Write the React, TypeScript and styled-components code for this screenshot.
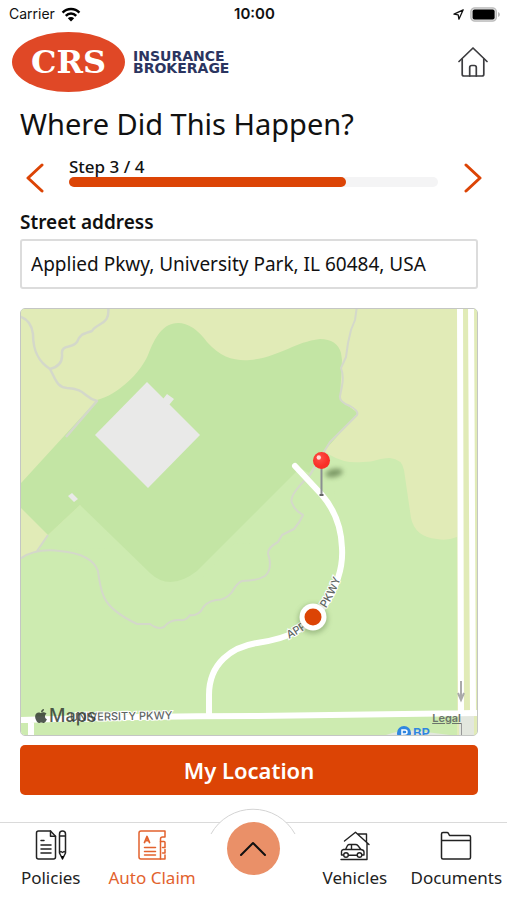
import React from "react";
import styled, { createGlobalStyle } from "styled-components";
import { FaApple } from "react-icons/fa";

const ACCENT = "#dc4405";

const GlobalStyle = createGlobalStyle`
  *, *::before, *::after { box-sizing: border-box; }
  body {
    margin: 0;
    background: #fff;
    color: #111;
    font-family: "Noto Sans", "Open Sans", sans-serif;
  }
  button, input { font: inherit; color: inherit; }
  svg { display: block; }
`;

const Screen = styled.div`
  display: flex;
  flex-direction: column;
  min-height: 100vh;
`;

const StatusBar = styled.div`
  display: grid;
  grid-template-columns: 1fr auto 1fr;
  align-items: center;
  height: 28px;
  padding: 0 7px 0 9px;
  font: 14px/20px Inter, sans-serif;
`;

const StatusGroup = styled.div<{ $end?: boolean }>`
  display: flex;
  align-items: center;
  gap: 6px;
  justify-content: ${(p) => (p.$end ? "flex-end" : "flex-start")};
`;

const Clock = styled.time`
  font-size: 15px;
  font-weight: 600;
`;

const Header = styled.header`
  display: flex;
  align-items: center;
  justify-content: space-between;
  height: 68px;
  padding: 0 19px 0 12px;
`;

const Brand = styled.a`
  display: flex;
  align-items: center;
  gap: 8px;
  color: #2b3560;
  text-decoration: none;
`;

const BrandBadge = styled.span`
  display: grid;
  place-items: center;
  width: 113px;
  height: 60px;
  border-radius: 50%;
  background: #e04826;
  color: #fff;
  font: bold 32px/32px "DejaVu Serif", serif;
`;

const BrandName = styled.span`
  display: flex;
  flex-direction: column;
  font: bold 14px/12px "DejaVu Sans", sans-serif;
`;

const IconButton = styled.button<{ $accent?: boolean }>`
  display: grid;
  place-items: center;
  padding: 0;
  border: 0;
  background: none;
  color: ${(p) => (p.$accent ? ACCENT : "#3c3c3f")};
  cursor: pointer;
`;

const Main = styled.main`
  display: flex;
  flex-direction: column;
  padding: 0 29px 27px 20px;
`;

const Title = styled.h1`
  margin: 8px 0 12px;
  font-size: 29px;
  line-height: 40px;
  font-weight: 400;
`;

const Stepper = styled.div`
  display: grid;
  grid-template-columns: 29px 1fr 29px;
  align-items: center;
  column-gap: 20px;
  margin-right: -9px;
  height: 44px;
`;

const Step = styled.div`
  display: flex;
  flex-direction: column;
  padding-bottom: 12px;
`;

const StepLabel = styled.span`
  font-size: 17px;
  line-height: 20px;
  font-weight: 500;
`;

const Track = styled.div`
  height: 10px;
  border-radius: 5px;
  background: #f4f4f5;
`;

const Fill = styled.div`
  height: 100%;
  border-radius: 5px;
  background: ${ACCENT};
`;

const Label = styled.label`
  margin-top: 8px;
  font-size: 19px;
  line-height: 28px;
  font-weight: 600;
`;

const AddressInput = styled.input`
  width: 100%;
  height: 50px;
  margin-top: 3px;
  padding: 0 9px;
  border: 2px solid #dcdcdc;
  border-radius: 3px;
  background: #fff;
  font-size: 19px;
  outline: 0;
`;

const MapCard = styled.section`
  position: relative;
  aspect-ratio: 458 / 428;
  margin: 19px 0 9px;
  border: 1px solid #c4c6c4;
  border-radius: 5px;
  overflow: hidden;

  > svg { width: 100%; height: 100%; }
`;

const Attribution = styled.span`
  position: absolute;
  left: 12px;
  bottom: 8px;
  display: flex;
  align-items: center;
  color: rgba(50, 60, 50, 0.85);
  font: 500 18px/22px Inter, sans-serif;
`;

const Legal = styled.a`
  position: absolute;
  right: 16px;
  bottom: 9px;
  color: #6b746b;
  font: 600 11px/16px Inter, sans-serif;
`;

const RoadLabel = styled.text`
  font: 500 11px Inter, sans-serif;
  fill: #5f6664;
  stroke: #fff;
  stroke-width: 2px;
  paint-order: stroke;
`;

const PlaceLabel = styled.text`
  font: 600 13px Inter, sans-serif;
  fill: #2f86e0;
`;

const PrimaryButton = styled.button`
  height: 50px;
  border: 0;
  border-radius: 5px;
  background: ${ACCENT};
  color: #fff;
  font-size: 22px;
  font-weight: 600;
  cursor: pointer;
`;

const TabBar = styled.nav`
  display: grid;
  grid-template-columns: repeat(5, 1fr);
  height: 78px;
  margin-top: auto;
  border-top: 1px solid #dadada;
`;

const Tab = styled.a<{ $active?: boolean }>`
  display: flex;
  flex-direction: column;
  align-items: center;
  gap: 5px;
  padding-top: 6px;
  color: ${(p) => (p.$active ? "#e2622e" : "#222")};
  font-size: 17px;
  line-height: 24px;
  white-space: nowrap;
  text-decoration: none;
`;

const CenterSlot = styled.div`
  position: relative;
  display: flex;
  justify-content: center;
`;

const Arc = styled.svg`
  position: absolute;
  top: -15px;
  left: 50%;
  transform: translateX(-50%);
`;

const ExpandButton = styled.button`
  position: relative;
  display: grid;
  place-items: center;
  width: 53px;
  height: 53px;
  margin-top: -1px;
  padding: 0;
  border: 0;
  border-radius: 50%;
  background: #ea9068;
  color: #111;
  cursor: pointer;
`;

const line = {
  fill: "none",
  stroke: "currentColor",
  strokeLinecap: "round" as const,
  strokeLinejoin: "round" as const,
};

const WifiIcon = () => (
  <svg width="20" height="15" viewBox="0 0 20 15" aria-hidden="true">
    <g fill="none" stroke="#000" strokeWidth="2.5">
      <path d="M1.6 5.6a11.8 11.8 0 0 1 16.8 0" />
      <path d="M4.8 8.8a7.3 7.3 0 0 1 10.4 0" />
    </g>
    <path d="M10 14.6 6.8 11.2a4.6 4.6 0 0 1 6.4 0z" />
  </svg>
);

const LocationIcon = () => (
  <svg width="11" height="11" viewBox="0 0 11 11" aria-hidden="true">
    <path d="M10.2.8 1 5.2l4.2.6.7 4.4z" {...line} strokeWidth="1.3" />
  </svg>
);

const BatteryIcon = () => (
  <svg width="30" height="15" viewBox="0 0 30 15" aria-hidden="true">
    <rect x=".8" y=".8" width="25.6" height="13.4" rx="4" fill="#ddd" stroke="#bbb" strokeWidth="1.2" />
    <rect x="2.6" y="2.6" width="22" height="9.8" rx="2" />
    <path d="M28 5q2 .8 2 2.5T28 10z" fill="#bbb" />
  </svg>
);

const HomeIcon = () => (
  <svg width="30" height="30" viewBox="0 0 30 30" aria-hidden="true">
    <g {...line} strokeWidth="1.7">
      <path d="M1 14.5 15 1l14 13.5" />
      <path d="M4.2 12v15.2q0 1.8 1.800 1.800h18q1.800 0 1.800-1.800V12" />
      <path d="M11.700 29V20.500q0-2 2-2h2.600q2 0 2 2V29" />
    </g>
  </svg>
);

const Chevron = ({ d, w, h, sw }: { d: string; w: number; h: number; sw: number }) => (
  <svg width={w} height={h} viewBox={`0 0 ${w} ${h}`} aria-hidden="true">
    <path d={d} {...line} strokeWidth={sw} />
  </svg>
);

const PoliciesIcon = () => (
  <svg width="32" height="32" viewBox="0 0 32 32" aria-hidden="true">
    <g {...line} strokeWidth="1.5">
      <path d="M15.500 2H3.500Q1.500 2 1.500 4v24q0 2 2 2H18.500q2 0 2-2V7.200z" />
      <path d="M15.500 2v5.200h5M6 11.500h3M6 16h10M6 20h10M6 24h10" />
      <path d="M24.500 5q0-3 3-3t3 3v19l-3 6-3-6zM24.500 7h6M24.500 23.500l1.500-1 1.500 1 1.500-1 1.500 1" />
    </g>
    <path d="m26 27 1.500 3.500L29 27z" />
  </svg>
);

const ClaimIcon = () => (
  <svg width="30" height="32" viewBox="0 0 30 32" aria-hidden="true">
    <g {...line} strokeWidth="1.5">
      <path d="M23.500 30H4q-2 0-2-2V4q0-2 2-2h24v6h-2.500q-2 0-2 2v2.500z" />
      <path d="M23.500 12.500h3.500q1 0 1 1v5h-2.500M28 20.500v3.500h-2.500M28 26v4h-4.500" />
      <path d="M7.500 18.500h11M7.500 22.500h11M7.500 26h11" />
      <path d="m7.500 13.500 2.500-6 2.500 6M8.600 11.500h3" strokeWidth="1.800" />
    </g>
  </svg>
);

const VehiclesIcon = () => (
  <svg width="32" height="32" viewBox="0 0 32 32" aria-hidden="true">
    <g {...line} strokeWidth="1.400">
      <path d="M5.500 12 16.500 3.300 30 15.500M18.500 5h9v8.500M28 14v16.500H2" />
      <path d="M4 26H2.500v-3.500q0-1.500 2-2h2l2-4q.6-1 2-1h6q1.500 0 2.500 1.200l3 3.800q3 .5 3 2.500v3H23M9.500 26.200h9M6.500 20.500h15.500M12.500 15.500v5" />
      <circle cx="7" cy="26" r="2.300" />
      <circle cx="20.500" cy="26" r="2.300" />
    </g>
  </svg>
);

const DocumentsIcon = () => (
  <svg width="32" height="32" viewBox="0 0 32 32" aria-hidden="true">
    <g {...line} strokeWidth="1.500">
      <path d="M1.500 28.500V5q0-1.500 1.500-1.500h4q1 0 1.500 1l1 2H29q1.500 0 1.500 1.500v20.500q0 1.500-1.500 1.500H3q-1.500 0-1.500-1.500zM1.500 11.500h29" />
    </g>
  </svg>
);

const APPLIED_PKWY =
  "M209 714V695C209 663 232 647 257 643Q284 639 299 630Q312 621 321 610Q332 597 338 578Q343 563 342 548Q341 517 322 495L295 466";

const MapDrawing = () => (
  <svg viewBox="21 309 456 426" preserveAspectRatio="xMidYMid slice" role="img" aria-label="Map of Applied Pkwy">
    <defs>
      <path id="applied-label" d="M289 639Q303 632 316 621Q332 605 343 572V540" />
      <filter id="soft" x="-50%" y="-100%" width="200%" height="300%">
        <feGaussianBlur stdDeviation="2.500" />
      </filter>
      <radialGradient id="pin-head" cx=".4" cy=".35">
        <stop offset="0" stopColor="#ff5148" />
        <stop offset="1" stopColor="#f92f28" />
      </radialGradient>
    </defs>
    <rect x="-200" y="0" width="1000" height="1100" fill="#cdebb0" />
    <path
      fill="#e1ebb7"
      d="M0 300H490V740H457V537Q447 541 437 539Q415 537 411 518L404 470Q402 459 390 458C378 458 376 462 363 462Q345 464 330 455L200 480L48 535L38 551L0 565z"
    />
    <path fill="#cdebb0" d="M322 450L330 455L340 540L60 550L48 535L80 505L200 580z" />
    <path
      fill="#c3e5a4"
      d="M0 503L22 482L97 400C118 395 141 372 148 355C155 337 163 323 178 323Q193 323 207 342C221 358 235 361 250 360C280 357 294 342 320 339Q337 339 341 353L342 360L340 400L358 413L326 449L309 473L300 468L197 571Q170 592 150 573L80 505L48 535L0 487z"
    />
    <g fill="#e9e9e8">
      <path d="M147 382 200 435 148 488 95 435z" />
      <path d="m167 394 7 5-5 6-6-6zM72 493l6 6-4 3-6-6z" />
    </g>
    <g fill="none" stroke="#d4d8ca" strokeWidth="2.500" strokeLinejoin="round">
      <path d="M18 316Q31 319 33 334C33 352 39 362 50 369C56 380 57 387 67 388C86 389 83 397 97 401L66 437" />
      <path d="M108 306C111 326 97 322 92 331C83 334 80 334 77 342C72 349 61 344 62 354Q63 366 50 369" />
      <path
        strokeWidth="2"
        d="M357 306L355 320 351 330 348 343 346 357 341 368Q344 376 342 386L340 396Q339 402 350 406Q359 411 357 415L330 442 325 450 310 475Q288 496 292 503Q295 511 303 515Q300 522 294 529L282 535 278 542Q265 549 269 557Q272 570 265 576Q257 581 242 581Q237 583 232 592Q226 600 216 600Q205 602 201 611Q196 616 190 615Q186 621 180 620Q170 619 164 627Q158 630 150 624L137 624Q110 611 104 597Q100 588 98 571Q92 554 60 551Q35 548 20 559M37 551 48 535"
      />
    </g>
    <path d="M386 735q20-7 40-3l24 3M459 713h15v24h-15z" fill="#e3e7de" />
    <g fill="none" stroke="#fff" strokeWidth="6">
      <path d="M460 300 461 716M471 300 473 716M18 720Q140 716 257 716L477 713M31 720V740" />
      <path d={APPLIED_PKWY} strokeLinecap="round" />
    </g>
    <path d="M461 681v18m-3-6 3 7 3-7" fill="none" stroke="#aaa" strokeWidth="2" />
    <path d="M461.500 723v14" stroke="#999" />
    <RoadLabel x="70" y="721" transform="rotate(-1 70 721)">UNIVERSITY PKWY</RoadLabel>
    <RoadLabel>
      <textPath href="#applied-label">APPLIED PKWY</textPath>
    </RoadLabel>
    <circle cx="404" cy="733" r="7" fill="#2f86e0" />
    <path d="M402 737v-7h3a2 2 0 0 1 0 4h-3" fill="none" stroke="#fff" strokeWidth="1.500" />
    <PlaceLabel x="413" y="738">BP</PlaceLabel>
    <circle cx="313" cy="619" r="15" fill="#5b7a4a" opacity=".4" filter="url(#soft)" />
    <circle cx="313" cy="617" r="13.500" fill="#fff" />
    <circle cx="313" cy="617" r="8.500" fill={ACCENT} />
    <ellipse cx="334" cy="473" rx="9" ry="4" fill="#4f6b3c" opacity=".65" filter="url(#soft)" transform="rotate(-12 334 473)" />
    <path d="M321.500 468v26" stroke="#8b8f92" strokeWidth="2" />
    <path d="M319.500 495h4" stroke="#666" strokeWidth="2" />
    <circle cx="321.500" cy="460.500" r="8.500" fill="url(#pin-head)" />
    <circle cx="318.800" cy="457.500" r="2.200" fill="#ffd9d6" />
  </svg>
);

export default function App() {
  const step = 3;
  const steps = 4;

  return (
    <>
      <GlobalStyle />
      <Screen>
        <StatusBar>
          <StatusGroup>
            <span>Carrier</span>
            <WifiIcon />
          </StatusGroup>
          <Clock>10:00</Clock>
          <StatusGroup $end>
            <LocationIcon />
            <BatteryIcon />
          </StatusGroup>
        </StatusBar>

        <Header>
          <Brand href="#home">
            <BrandBadge>CRS</BrandBadge>
            <BrandName>
              <span>INSURANCE</span>
              <span>BROKERAGE</span>
            </BrandName>
          </Brand>
          <IconButton type="button" aria-label="Home">
            <HomeIcon />
          </IconButton>
        </Header>

        <Main>
          <Title>Where Did This Happen?</Title>
          <Stepper>
            <IconButton $accent type="button" aria-label="Previous step">
              <Chevron d="M16 2 2 15l14 13" w={18} h={30} sw={3} />
            </IconButton>
            <Step>
              <StepLabel id="step-label">
                Step {step} / {steps}
              </StepLabel>
              <Track role="progressbar" aria-labelledby="step-label" aria-valuenow={step} aria-valuemin={0} aria-valuemax={steps}>
                <Fill style={{ width: `${(step / steps) * 100}%` }} />
              </Track>
            </Step>
            <IconButton $accent type="button" aria-label="Next step">
              <Chevron d="m2 2 14 13L2 28" w={18} h={30} sw={3} />
            </IconButton>
          </Stepper>

          <Label htmlFor="address">Street address</Label>
          <AddressInput id="address" type="text" defaultValue="Applied Pkwy, University Park, IL 60484, USA" />

          <MapCard>
            <MapDrawing />
            <Attribution>
              <FaApple size={16} />
              Maps
            </Attribution>
            <Legal href="#legal">Legal</Legal>
          </MapCard>

          <PrimaryButton type="button">My Location</PrimaryButton>
        </Main>

        <TabBar>
          <Tab href="#policies">
            <PoliciesIcon />
            Policies
          </Tab>
          <Tab href="#claim" $active aria-current="page">
            <ClaimIcon />
            Auto Claim
          </Tab>
          <CenterSlot>
            <Arc width="86" height="27" viewBox="0 0 86 27" aria-hidden="true">
              <path d="M1 26A48 48 0 0 1 85 26" fill="#fff" stroke="#d4d4d4" />
            </Arc>
            <ExpandButton type="button" aria-label="Expand menu">
              <Chevron d="M2 14 14 2l12 12" w={28} h={16} sw={2} />
            </ExpandButton>
          </CenterSlot>
          <Tab href="#vehicles">
            <VehiclesIcon />
            Vehicles
          </Tab>
          <Tab href="#documents">
            <DocumentsIcon />
            Documents
          </Tab>
        </TabBar>
      </Screen>
    </>
  );
}
